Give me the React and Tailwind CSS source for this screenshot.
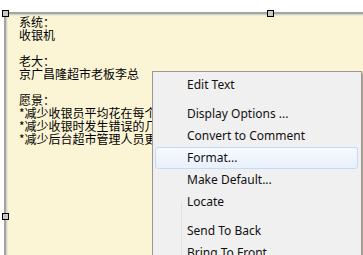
import React from 'react';

const noteLines = [
  '系统：',
  '收银机',
  '',
  '老大：',
  '京广昌隆超市老板李总',
  '',
  '愿景：',
  '*减少收银员平均花在每个顾客身上的时间',
  '*减少收银时发生错误的几率',
  '*减少后台超市管理人员更新库存的工作量',
];

const menuItems = [
  { label: 'Edit Text' },
  { sep: true },
  { label: 'Display Options ...' },
  { label: 'Convert to Comment' },
  { label: 'Format...', active: true },
  { label: 'Make Default...' },
  { label: 'Locate' },
  { sep: true },
  { label: 'Send To Back' },
  { label: 'Bring To Front' },
];

const Handle = ({ className }) => (
  <div className={`absolute w-[7px] h-[7px] border border-black bg-[#c8c8c8] ${className}`} />
);

const App = () => {
  return (
    <div className="relative w-[363px] h-[255px] overflow-hidden bg-white pt-[12px] pl-[4px]">
      {/* 便签 */}
      <div className="h-[260px] bg-[#fbf5d6] border-t-2 border-l-2 border-[#a4a4a0] shadow-[inset_1px_1px_0_#d4d2c4,inset_2px_2px_0_#ece8d4]">
        <div
          className="w-[146px] overflow-hidden pl-[13px] pt-[1px] flex flex-col text-[12px] text-black whitespace-nowrap"
          style={{ fontFamily: '"Noto Sans CJK SC", "Liberation Sans", sans-serif' }}
        >
          {noteLines.map((line, i) => (
            <div key={i} className="h-[13px] leading-[13px]">{line}</div>
          ))}
        </div>
      </div>

      {/* 选择手柄 */}
      <Handle className="left-[2px] top-[10px]" />
      <Handle className="left-[267px] top-[10px]" />
      <Handle className="left-[2px] top-[213px]" />

      {/* 右键菜单 */}
      <div
        className="absolute left-[152px] top-[71px] w-[210px] h-[200px] flex flex-col bg-[#f0f0f0] border border-[#979797] shadow-[2px_2px_2px_rgba(0,0,0,0.35)] pt-[2px] text-[12px] text-[#111]"
        style={{ fontFamily: '"Noto Sans", "Open Sans", sans-serif' }}
      >
        <div className="absolute left-[28px] top-[130px] bottom-0 w-[1px] bg-[#e2e3e3]" />
        {menuItems.map((item, i) =>
          item.sep ? (
            <div key={i} className="h-[7px] shrink-0" />
          ) : (
            <div
              key={i}
              className={`relative shrink-0 ml-[2px] mr-[3px] h-[22px] pl-[31px] flex items-center border rounded-[3px] ${
                item.active
                  ? 'border-[#c4daf5] bg-gradient-to-b from-[#f6f9fe] to-[#e8f0fb]'
                  : 'border-transparent'
              }`}
            >
              {item.label}
            </div>
          )
        )}
      </div>
    </div>
  );
};

export default App;
